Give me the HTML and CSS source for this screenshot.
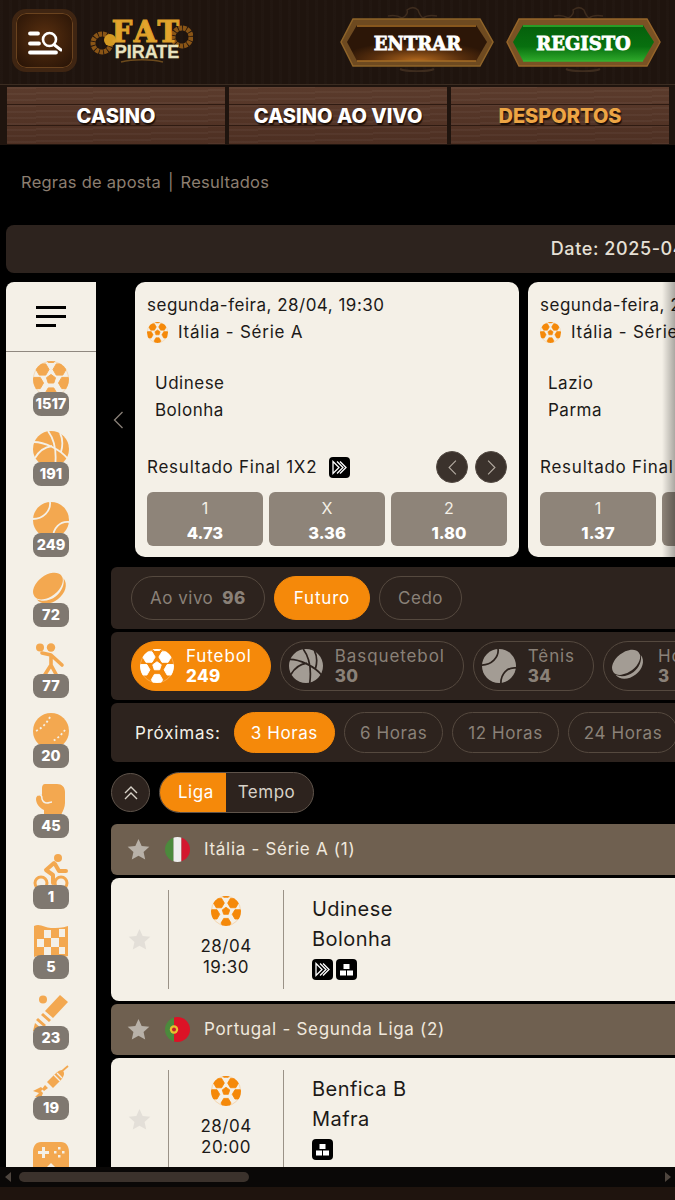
FILE: index.html
```html
<!DOCTYPE html>
<html lang="pt">
<head>
    <meta charset="UTF-8">
    <meta name="viewport" content="width=device-width, initial-scale=1.0">
    <title>Fat Pirate - Desportos</title>
    <link rel="stylesheet" href="styles.css">
</head>
<body>
    <svg class="icon-defs" width="0" height="0" aria-hidden="true">
        <defs>
            <clipPath id="ballClip"><circle cx="18" cy="18" r="18"/></clipPath>
            <symbol id="i-soccer" viewBox="0 0 36 36">
                <g clip-path="url(#ballClip)" fill="currentColor" stroke="currentColor" stroke-width="1" stroke-linejoin="round">
                    <path d="M3 8.500l3.250-5.600h6.500L16 8.500l-3.250 5.600h-6.500zM20 8.500l3.250-5.600h6.500L33 8.500l-3.250 5.600h-6.500zM-2.500 22l3.250-5.600h6.500L10.500 22l-3.250 5.600h-6.500zM25.500 22l3.250-5.600h6.500L38.500 22l-3.250 5.600h-6.500zM12 32.500l3.250-5.600h5.500L24 32.500l-3.250 5.600h-5.500zM12-2l3.250-1h5.500l3.250 1-3.250 3.500h-5.500z"/>
                    <path d="M18 13.500l4.500 3.200-1.700 5.300h-5.600l-1.700-5.300z"/>
                </g>
                <circle cx="18" cy="18" r="17.600" fill="none" stroke="currentColor" stroke-width=".6" opacity=".5"/>
            </symbol>
            <symbol id="i-basket" viewBox="0 0 36 36">
                <circle cx="18" cy="18" r="18" fill="currentColor"/>
                <path d="M15 0c6 8 9 20 7 36M1 11c10 0 26 7 34 17M2 27c4-7 10-11 17-12M27 2c3 6 3 12 1 19" fill="none" stroke="var(--gap)" stroke-width="1.800"/>
            </symbol>
            <symbol id="i-tennis" viewBox="0 0 36 36">
                <circle cx="18" cy="18" r="18" fill="currentColor"/>
                <path d="M17 0c1 9-7 17-17 17M36 20c-9-1-16 6-16 16" fill="none" stroke="var(--gap)" stroke-width="1.800"/>
            </symbol>
            <symbol id="i-puck" viewBox="0 0 36 36">
                <g transform="rotate(-38 18 18)" fill="currentColor">
                    <ellipse cx="18" cy="13" rx="17" ry="10.500"/>
                    <path d="M1 16.500c0 8 8 13 17 13s17-5 17-13c-3 6-10 9.500-17 9.500S4 22.500 1 16.500z"/>
                </g>
            </symbol>
            <symbol id="i-handball" viewBox="0 0 36 36">
                <circle cx="7" cy="4.500" r="4" fill="currentColor"/>
                <circle cx="18" cy="4.500" r="4.200" fill="currentColor"/>
                <path d="M9 10l9 2 11 10M18 12v10l-7 11M18 22l6 11" fill="none" stroke="currentColor" stroke-width="3.600" stroke-linecap="round" stroke-linejoin="round"/>
            </symbol>
            <symbol id="i-baseball" viewBox="0 0 36 36">
                <circle cx="18" cy="18" r="18" fill="currentColor"/>
                <path d="M17 4c-3 6-8 11-14 14M32 17c-3 4-7 8-12 11" fill="none" stroke="var(--gap)" stroke-width="1.800" stroke-dasharray="2 2.500"/>
            </symbol>
            <symbol id="i-glove" viewBox="0 0 36 36">
                <path d="M12 1h12c5 0 8 3 8 8v11c0 4-2 8-4 12v4H11v-9c-4-2-8-6-8-11 0-3 3-5 6-4V5c0-2 1-4 3-4z" fill="currentColor"/>
                <path d="M5 12c3-1 4 1 4 4 1 3 3 4 5 4 2 0 3-1 5-1" fill="none" stroke="var(--gap)" stroke-width="1.500"/>
            </symbol>
            <symbol id="i-cycling" viewBox="0 0 36 36">
                <circle cx="25" cy="4" r="4" fill="currentColor"/>
                <path d="M21 9l-8 7 7 5v8M22 10l4 7h7" fill="none" stroke="currentColor" stroke-width="4" stroke-linecap="round" stroke-linejoin="round"/>
                <circle cx="8" cy="29" r="6" fill="none" stroke="currentColor" stroke-width="3"/>
                <circle cx="28" cy="29" r="6" fill="none" stroke="currentColor" stroke-width="3"/>
            </symbol>
            <symbol id="i-flag" viewBox="0 0 36 36">
                <path d="M1 2c6-3 11 2 17 2s11 0 17-2v30c-6 2-11 2-17 2S7 30 1 33z" fill="currentColor"/>
                <path d="M11 6h7v8h-7zM4 15h7v8H4zM18 14h8v9h-8zM26 5h6v8h-6zM11 23h7v8h-7zM26 23h6v7h-6z" fill="var(--gap)"/>
            </symbol>
            <symbol id="i-cricket" viewBox="0 0 36 36">
                <circle cx="10" cy="4.500" r="4" fill="currentColor"/>
                <path d="M27 0l8 7-15 16-8-7zM10 18l8 7-2 2-8-7zM5 23l8 7-2 2-8-7zM2 28l7 6-3 2H0z" fill="currentColor"/>
            </symbol>
            <symbol id="i-darts" viewBox="0 0 36 36">
                <path d="M35 1l-7 6" fill="none" stroke="currentColor" stroke-width="1.800"/>
                <path d="M30 6c2 2 1 6-3 10l-7 7-6-6 7-7c4-4 7-6 9-4z" fill="currentColor"/>
                <path d="M21 10l6 6M24 8l5 5" fill="none" stroke="var(--gap)" stroke-width="1.400"/>
                <path d="M15 23l-4 3-2-2 3-4zM0 26l8-4 2 2-4 4zM2 32l6-6 2 2-2 5z" fill="currentColor"/>
            </symbol>
            <symbol id="i-game" viewBox="0 0 36 36">
                <g transform="translate(0 6)">
                    <path d="M8 1h20c5 0 8 4 8 10v17c0 4-2 7-5 7-3 0-5-3-8-8l-5-5-5 5c-3 5-5 8-8 8-3 0-5-3-5-7V11C0 5 3 1 8 1z" fill="currentColor"/>
                    <path d="M9 6h3v4h4v3h-4v4H9v-4H5v-3h4z" fill="var(--gap)"/>
                    <path d="M25 6h2.500v2.500H25zM25 14h2.500v2.500H25zM21 10h2.500v2.500H21zM29 10h2.500v2.500H29z" fill="var(--gap)"/>
                </g>
            </symbol>
            <symbol id="i-boost" viewBox="0 0 21 21">
                <rect width="21" height="21" rx="4" fill="#000"/>
                <path d="M4 4.500l6 6-6 6z" fill="none" stroke="#fff" stroke-width="1.300"/>
                <path d="M8 4.500l6 6-6 6M11 4.500l6 6-6 6" fill="none" stroke="#fff" stroke-width="1.300"/>
            </symbol>
            <symbol id="i-combo" viewBox="0 0 21 21">
                <rect width="21" height="21" rx="4" fill="#000"/>
                <path d="M7.500 5h6v5h-6zM4 11.500h6v5H4zM11 11.500h6v5h-6z" fill="#fff"/>
            </symbol>
            <symbol id="i-star" viewBox="0 0 24 24">
                <path d="M12 1l3.300 7.400 8 .8-6 5.400 1.700 7.900-7-4.100-7 4.100 1.700-7.900-6-5.400 8-.8z" fill="currentColor"/>
            </symbol>
            <symbol id="i-left" viewBox="0 0 12 20">
                <path d="M10 2L2 10l8 8" fill="none" stroke="currentColor" stroke-width="1.300"/>
            </symbol>
            <symbol id="i-right" viewBox="0 0 12 20">
                <path d="M2 2l8 8-8 8" fill="none" stroke="currentColor" stroke-width="1.300"/>
            </symbol>
        </defs>
    </svg>

    <header class="topbar">
        <button class="menu-btn">
            <svg width="34" height="28" viewBox="0 0 34 28">
                <path d="M2 6.500h8M2 16.500h9M2 25.500h26" fill="none" stroke="#fff" stroke-width="3.800" stroke-linecap="round"/>
                <circle cx="21.500" cy="12.500" r="6.500" fill="none" stroke="#fff" stroke-width="2.600"/>
                <path d="M26.500 18l6.500 5" fill="none" stroke="#fff" stroke-width="3" stroke-linecap="round"/>
            </svg>
        </button>
        <div class="logo">
            <svg class="logo-art" width="104" height="44" viewBox="0 0 104 44">
                <circle cx="13" cy="23" r="9" fill="none" stroke="#8a5516" stroke-width="5" stroke-dasharray="3.500 .8"/>
                <circle cx="93" cy="17" r="9" fill="none" stroke="#8a5516" stroke-width="5" stroke-dasharray="3.500 .8"/>
                <circle cx="21" cy="20" r="6" fill="#d49a22"/>
                <path d="M32 42c12-3 30-3 42 0" fill="none" stroke="#6c4a1c" stroke-width="1.500"/>
            </svg>
            <div class="logo-text">
                <span class="logo-fat">FAT</span>
                <span class="logo-pirate">PIRATE</span>
            </div>
        </div>
        <div class="auth">
            <a class="auth-btn">
                <svg width="155" height="66" viewBox="0 0 155 66">
                    <defs>
                        <radialGradient id="entrarFill" cx=".5" cy="1" r=".55">
                            <stop offset="0" stop-color="#b56a1e"/>
                            <stop offset=".6" stop-color="#572e0d"/>
                            <stop offset="1" stop-color="#2c1607"/>
                        </radialGradient>
                    </defs>
                    <path d="M62 12c5-2 6-6 5-8 4-3 8-3 11 0 1 3 2 6 5 8 4-3 8-3 14-2M62 12c-5-3-9-3-14-2" fill="none" stroke="#3e2c1e" stroke-width="1.500"/>
                    <path d="M60 63c6 3 28 3 34 0" fill="none" stroke="#3e2c1e" stroke-width="2"/>
                    <path d="M1 36l12-23h127l13 23-13 24H13z" fill="#6e4a20" stroke="#8f6429" stroke-width="1.500"/>
                    <path d="M7 36l10-17h119l11 17-11 19H17z" fill="url(#entrarFill)"/>
                    <path d="M17 20h119M17 55h119" stroke="#a56d26" stroke-width="1.300"/>
                </svg>
                <span>ENTRAR</span>
            </a>
            <a class="auth-btn">
                <svg width="155" height="66" viewBox="0 0 155 66">
                    <defs>
                        <linearGradient id="registoFill" x1="0" y1="0" x2="0" y2="1">
                            <stop offset="0" stop-color="#055f0c"/>
                            <stop offset=".6" stop-color="#08700f"/>
                            <stop offset="1" stop-color="#2ea82a"/>
                        </linearGradient>
                    </defs>
                    <path d="M62 12c5-2 6-6 5-8 4-3 8-3 11 0 1 3 2 6 5 8 4-3 8-3 14-2M62 12c-5-3-9-3-14-2" fill="none" stroke="#3e2c1e" stroke-width="1.500"/>
                    <path d="M60 63c6 3 28 3 34 0" fill="none" stroke="#3e2c1e" stroke-width="2"/>
                    <path d="M1 36l12-23h128l13 23-13 24H13z" fill="#7a5224" stroke="#96652a" stroke-width="1.500"/>
                    <path d="M7 36l10-17h120l11 17-11 19H17z" fill="url(#registoFill)"/>
                    <path d="M17 20h120M17 55h120" stroke="#35b02f" stroke-width="1.300"/>
                </svg>
                <span>REGISTO</span>
            </a>
        </div>
    </header>

    <nav class="tabs">
        <a class="tab">CASINO</a>
        <a class="tab">CASINO AO VIVO</a>
        <a class="tab active">DESPORTOS</a>
    </nav>

    <main class="content">
        <div class="wide">
            <div class="links">Regras de aposta <span class="links-sep">|</span> Resultados</div>
            <div class="date-bar">Date: 2025-04-28</div>

            <div class="columns">
                <aside class="sidebar">
                    <div class="burger"><i></i><i></i><i class="short"></i></div>
                    <div class="sport-list">
                        <a class="sport"><svg class="sport-icon"><use href="#i-soccer"/></svg><b>1517</b></a>
                        <a class="sport"><svg class="sport-icon"><use href="#i-basket"/></svg><b>191</b></a>
                        <a class="sport"><svg class="sport-icon"><use href="#i-tennis"/></svg><b>249</b></a>
                        <a class="sport"><svg class="sport-icon"><use href="#i-puck"/></svg><b>72</b></a>
                        <a class="sport"><svg class="sport-icon"><use href="#i-handball"/></svg><b>77</b></a>
                        <a class="sport"><svg class="sport-icon"><use href="#i-baseball"/></svg><b>20</b></a>
                        <a class="sport"><svg class="sport-icon"><use href="#i-glove"/></svg><b>45</b></a>
                        <a class="sport"><svg class="sport-icon"><use href="#i-cycling"/></svg><b>1</b></a>
                        <a class="sport"><svg class="sport-icon"><use href="#i-flag"/></svg><b>5</b></a>
                        <a class="sport"><svg class="sport-icon"><use href="#i-cricket"/></svg><b>23</b></a>
                        <a class="sport"><svg class="sport-icon"><use href="#i-darts"/></svg><b>19</b></a>
                        <a class="sport"><svg class="sport-icon"><use href="#i-game"/></svg></a>
                    </div>
                </aside>

                <section class="events">
                    <div class="slider">
                        <svg class="slider-prev"><use href="#i-left"/></svg>
                        <article class="card">
                            <div class="card-line">segunda-feira, 28/04, 19:30</div>
                            <div class="card-league"><svg class="card-ball"><use href="#i-soccer"/></svg>Itália - Série A</div>
                            <div class="card-teams"><div>Udinese</div><div>Bolonha</div></div>
                            <div class="card-market">
                                <span>Resultado Final 1X2</span>
                                <svg class="badge"><use href="#i-boost"/></svg>
                                <div class="card-arrows">
                                    <button class="round-btn"><svg><use href="#i-left"/></svg></button>
                                    <button class="round-btn"><svg><use href="#i-right"/></svg></button>
                                </div>
                            </div>
                            <div class="odds">
                                <a class="odd">1<b>4.73</b></a>
                                <a class="odd">X<b>3.36</b></a>
                                <a class="odd">2<b>1.80</b></a>
                            </div>
                        </article>
                        <article class="card">
                            <div class="card-line">segunda-feira, 28/04, 20:45</div>
                            <div class="card-league"><svg class="card-ball"><use href="#i-soccer"/></svg>Itália - Série A</div>
                            <div class="card-teams"><div>Lazio</div><div>Parma</div></div>
                            <div class="card-market">
                                <span>Resultado Final 1X2</span>
                                <svg class="badge"><use href="#i-boost"/></svg>
                                <div class="card-arrows">
                                    <button class="round-btn"><svg><use href="#i-left"/></svg></button>
                                    <button class="round-btn"><svg><use href="#i-right"/></svg></button>
                                </div>
                            </div>
                            <div class="odds">
                                <a class="odd">1<b>1.37</b></a>
                                <a class="odd">X<b>4.80</b></a>
                                <a class="odd">2<b>8.50</b></a>
                            </div>
                        </article>
                        <div class="slider-fade"></div>
                    </div>

                    <div class="panel panel-mode">
                        <a class="pill">Ao vivo <b>96</b></a>
                        <a class="pill on">Futuro</a>
                        <a class="pill">Cedo</a>
                    </div>

                    <div class="panel panel-sports">
                        <a class="pill sport-pill on">
                            <svg class="pill-icon"><use href="#i-soccer"/></svg>
                            <span>Futebol<b>249</b></span>
                        </a>
                        <a class="pill sport-pill">
                            <svg class="pill-icon"><use href="#i-basket"/></svg>
                            <span>Basquetebol<b>30</b></span>
                        </a>
                        <a class="pill sport-pill">
                            <svg class="pill-icon"><use href="#i-tennis"/></svg>
                            <span>Tênis<b>34</b></span>
                        </a>
                        <a class="pill sport-pill">
                            <svg class="pill-icon"><use href="#i-puck"/></svg>
                            <span>Hóquei<b>3</b></span>
                        </a>
                    </div>

                    <div class="panel panel-time">
                        <span class="panel-label">Próximas:</span>
                        <a class="pill on">3 Horas</a>
                        <a class="pill">6 Horas</a>
                        <a class="pill">12 Horas</a>
                        <a class="pill">24 Horas</a>
                    </div>

                    <div class="order">
                        <button class="collapse">
                            <svg width="16" height="18" viewBox="0 0 16 18"><path d="M2 9l6-6 6 6M2 15l6-6 6 6" fill="none" stroke="#d8d2c8" stroke-width="1.400"/></svg>
                        </button>
                        <div class="switch"><a class="on">Liga</a><a>Tempo</a></div>
                    </div>

                    <div class="league">
                        <svg class="star"><use href="#i-star"/></svg>
                        <svg class="flag" viewBox="0 0 25 25">
                            <clipPath id="flagIt"><circle cx="12.500" cy="12.500" r="12.500"/></clipPath>
                            <g clip-path="url(#flagIt)">
                                <path d="M0 0h8.500v25H0z" fill="#4b8a3c"/>
                                <path d="M8.500 0h8v25h-8z" fill="#eee"/>
                                <path d="M16.500 0H25v25h-8.500z" fill="#d3172e"/>
                            </g>
                        </svg>
                        <span>Itália - Série A (1)</span>
                    </div>
                    <div class="match">
                        <svg class="match-star"><use href="#i-star"/></svg>
                        <div class="match-time">
                            <svg class="match-ball"><use href="#i-soccer"/></svg>
                            <div>28/04</div>
                            <div>19:30</div>
                        </div>
                        <div class="match-teams">
                            <div>Udinese</div>
                            <div>Bolonha</div>
                            <div class="match-badges">
                                <svg class="badge"><use href="#i-boost"/></svg>
                                <svg class="badge"><use href="#i-combo"/></svg>
                            </div>
                        </div>
                    </div>

                    <div class="league">
                        <svg class="star"><use href="#i-star"/></svg>
                        <svg class="flag" viewBox="0 0 25 25">
                            <clipPath id="flagPt"><circle cx="12.500" cy="12.500" r="12.500"/></clipPath>
                            <g clip-path="url(#flagPt)">
                                <path d="M0 0h9v25H0z" fill="#4b8a3c"/>
                                <path d="M9 0h16v25H9z" fill="#dc1226"/>
                                <circle cx="9" cy="12.500" r="4.200" fill="#e8c02e"/>
                                <circle cx="9" cy="12.500" r="2" fill="#c3202c"/>
                            </g>
                        </svg>
                        <span>Portugal - Segunda Liga (2)</span>
                    </div>
                    <div class="match">
                        <svg class="match-star"><use href="#i-star"/></svg>
                        <div class="match-time">
                            <svg class="match-ball"><use href="#i-soccer"/></svg>
                            <div>28/04</div>
                            <div>20:00</div>
                        </div>
                        <div class="match-teams">
                            <div>Benfica B</div>
                            <div>Mafra</div>
                            <div class="match-badges">
                                <svg class="badge"><use href="#i-combo"/></svg>
                            </div>
                        </div>
                    </div>
                </section>
            </div>
        </div>
    </main>

    <div class="hscroll">
        <i class="hscroll-left"></i>
        <i class="hscroll-thumb"></i>
        <i class="hscroll-right"></i>
    </div>
    <div class="bottom-strip"></div>
</body>
</html>
```

FILE: styles.css
```css
* {
    box-sizing: border-box;
}
body {
    margin: 0;
    height: 1200px;
    overflow: hidden;
    background: #000;
    color: #1c1a18;
    font-family: "Inter", "Open Sans", sans-serif;
    font-size: 17px;
    letter-spacing: .5px;
}
a {
    color: inherit;
    text-decoration: none;
}
button {
    font: inherit;
    cursor: pointer;
}
.icon-defs {
    display: block;
    height: 0;
}

/* header */
.topbar {
    display: flex;
    align-items: flex-start;
    height: 85px;
    padding-left: 12px;
    background:
        repeating-linear-gradient(90deg, rgba(255, 255, 255, .012) 0 3px, transparent 3px 9px),
        #1f140e;
    border-bottom: 1px solid #3b2c21;
}
.menu-btn {
    display: flex;
    align-items: center;
    justify-content: center;
    width: 65px;
    height: 63px;
    margin-top: 9px;
    padding: 0;
    border: 4px solid #3f2512;
    border-radius: 14px;
    background: radial-gradient(circle at 50% 45%, #5a3010, #2c1607 85%);
    box-shadow: inset 0 0 0 1px #6a431f;
}
.logo {
    display: grid;
    width: 104px;
    height: 44px;
    margin: 20px 0 0 12px;
}
.logo-art,
.logo-text {
    grid-area: 1 / 1;
}
.logo-text {
    display: flex;
    flex-direction: column;
    align-items: center;
    padding-left: 12px;
    letter-spacing: 0;
    font-weight: 700;
}
.logo-fat {
    margin-top: 1px;
    font-family: "DejaVu Serif", serif;
    font-size: 29px;
    font-weight: 700;
    line-height: 23px;
    letter-spacing: 3px;
    color: #e2a42c;
    -webkit-text-stroke: 1.200px #dc9f2a;
}
.logo-pirate {
    font-family: "Liberation Sans", sans-serif;
    font-size: 18px;
    line-height: 16px;
    color: #e8e2bf;
    -webkit-text-stroke: .3px #e8e2bf;
}
.auth {
    display: flex;
    gap: 11px;
    margin: 6px 14px 0 auto;
}
.auth-btn {
    display: grid;
    place-items: center;
    width: 155px;
    height: 66px;
}
.auth-btn svg,
.auth-btn span {
    grid-area: 1 / 1;
}
.auth-btn span {
    margin-top: 8px;
    font-family: "DejaVu Serif", serif;
    font-size: 18px;
    font-weight: 700;
    letter-spacing: 0;
    color: #fff;
    -webkit-text-stroke: .8px #fff;
}

/* wood tabs */
.tabs {
    display: flex;
    gap: 4px;
    height: 60px;
    padding: 2px 6px 1px 7px;
    background: #1f140e;
}
.tab {
    flex: 1;
    display: flex;
    align-items: center;
    justify-content: center;
    font-size: 20px;
    font-weight: 800;
    letter-spacing: 0;
    color: #fff;
    text-shadow: 1px 2px 1px #1c0f08;
    background:
        linear-gradient(180deg, transparent 0 29%, #2f1b12 29% 31%, transparent 31% 66%, #2f1b12 66% 68%, transparent 68%),
        repeating-linear-gradient(179deg, rgba(255, 255, 255, .035) 0 2px, transparent 2px 6px),
        linear-gradient(180deg, #5b3b2c, #4d2f22);
}
.tab.active {
    color: #eda544;
}

/* main scroll area */
.content {
    height: 1022px;
    overflow: hidden;
}
.wide {
    width: 1280px;
    padding-left: 6px;
}
.links {
    height: 80px;
    padding: 26px 0 0 15px;
    line-height: 22px;
    font-size: 16.500px;
    letter-spacing: .25px;
    color: #8c7e70;
}
.links-sep {
    margin: 0 2px;
}
.date-bar {
    width: 1256px;
    height: 48px;
    margin-bottom: 9px;
    border-radius: 8px;
    background: #2d231e;
    color: #e6e0d6;
    font-size: 18px;
    font-weight: 500;
    letter-spacing: .6px;
    line-height: 48px;
    text-align: center;
}
.columns {
    display: flex;
    gap: 15px;
}

/* sports sidebar */
.sidebar {
    flex: 0 0 90px;
    background: #f4f0e7;
    border-top-left-radius: 8px;
}
.burger {
    display: flex;
    flex-direction: column;
    justify-content: center;
    gap: 6px;
    height: 70px;
    padding-left: 30px;
    border-bottom: 1px solid #8f8880;
}
.burger i {
    display: block;
    width: 30px;
    height: 3px;
    background: #000;
}
.burger i.short {
    width: 20px;
}
.sport-list {
    display: flex;
    flex-direction: column;
    align-items: center;
    gap: 15.400px;
    padding-top: 9px;
}
.sport {
    display: flex;
    flex-direction: column;
    align-items: center;
}
.sport-icon {
    display: block;
    width: 36px;
    height: 36px;
    color: #f3a850;
    --gap: #f4f0e7;
}
.sport b {
    min-width: 36px;
    height: 24px;
    margin-top: -5px;
    padding: 0 3px;
    border-radius: 8px;
    background: #7f7870;
    color: #fff;
    font-size: 14.500px;
    font-weight: 800;
    letter-spacing: 0;
    line-height: 24px;
    text-align: center;
    z-index: 1;
}

/* featured slider */
.events {
    flex: 1;
    min-width: 0;
}
.slider {
    position: relative;
    display: flex;
    align-items: center;
    gap: 9px;
    width: 564px;
}
.slider-prev {
    flex: 0 0 15px;
    width: 15px;
    height: 20px;
    color: #8a8178;
}
.card {
    flex: 0 0 384px;
    display: flex;
    flex-direction: column;
    height: 275px;
    padding: 12px 12px 11px;
    border-radius: 10px;
    background: #f4f0e7;
}
.card-line,
.card-league,
.card-teams div {
    height: 22px;
    line-height: 22px;
    white-space: nowrap;
}
.card-league {
    display: flex;
    align-items: center;
    margin-top: 5px;
    letter-spacing: .75px;
}
.card-ball {
    width: 21px;
    height: 21px;
    margin-right: 10px;
    color: #f5890a;
}
.card-teams {
    display: flex;
    flex-direction: column;
    gap: 5px;
    margin: 29px 0 0 8px;
    letter-spacing: .5px;
}
.card-market {
    display: flex;
    align-items: center;
    height: 32px;
    margin: auto 0 9px;
    letter-spacing: .75px;
    white-space: nowrap;
}
.badge {
    flex: none;
    width: 21px;
    height: 21px;
}
.card-market .badge {
    margin-left: 12px;
}
.card-arrows {
    display: flex;
    gap: 7px;
    margin-left: auto;
}
.round-btn {
    display: flex;
    align-items: center;
    justify-content: center;
    width: 32px;
    height: 32px;
    padding: 0;
    border: 1px solid #544b44;
    border-radius: 50%;
    background: #3b322c;
    color: #b4aca2;
}
.round-btn svg {
    width: 11px;
    height: 17px;
}
.odds {
    display: grid;
    grid-template-columns: repeat(3, 1fr);
    gap: 6px;
}
.odd {
    display: flex;
    flex-direction: column;
    align-items: center;
    justify-content: center;
    height: 54px;
    padding-top: 2px;
    border-radius: 6px;
    background: #8e8479;
    color: #f4f0e7;
    font-size: 16px;
    letter-spacing: 0;
    line-height: 24px;
}
.odd b {
    margin-top: 1px;
    color: #fff;
    font-size: 16.500px;
    font-weight: 800;
}
.slider-fade {
    position: absolute;
    top: 0;
    right: 0;
    bottom: 0;
    width: 13px;
    background: linear-gradient(90deg, rgba(0, 0, 0, 0), rgba(0, 0, 0, .3));
}

/* filter panels */
.panel {
    display: flex;
    align-items: center;
    gap: 9px;
    width: 1150px;
    margin-top: 3px;
    padding-left: 20px;
    border-radius: 6px;
    background: #2d231e;
}
.panel-mode {
    height: 62px;
    margin-top: 10px;
}
.panel-sports {
    height: 68px;
    letter-spacing: .9px;
}
.panel-time {
    height: 59px;
    padding-left: 24px;
    letter-spacing: .6px;
}
.panel-label {
    margin-right: 4px;
    letter-spacing: .8px;
    color: #f4f0e7;
}
.pill {
    display: flex;
    align-items: center;
    height: 44px;
    padding: 0 18px;
    border: 1px solid #55493f;
    border-radius: 22px;
    color: #8a8178;
    white-space: nowrap;
}
.panel-mode .pill.on {
    padding: 0 19px;
    letter-spacing: .8px;
}
.panel-time .pill {
    height: 41px;
    padding: 0 15px;
}
.panel-time .pill.on {
    padding: 0 16px;
}
.pill b {
    margin-left: 9px;
    font-weight: 800;
}
.pill.on {
    border-color: #f5890a;
    background: #f5890a;
    color: #fff;
}
.sport-pill {
    gap: 12px;
    height: 50px;
    padding: 0 18px 0 8px;
    border-radius: 25px;
    line-height: 20px;
}
.sport-pill span {
    display: flex;
    flex-direction: column;
}
.sport-pill b {
    margin: 0;
    letter-spacing: .3px;
}
.pill-icon {
    flex: none;
    width: 34px;
    height: 34px;
    color: #a39c94;
    --gap: #2d231e;
}
.pill.on .pill-icon {
    color: #fff;
    --gap: #f5890a;
}

/* sort row */
.order {
    display: flex;
    gap: 9px;
    margin-top: 10px;
}
.collapse {
    display: flex;
    align-items: center;
    justify-content: center;
    width: 39px;
    height: 39px;
    margin-top: 1px;
    padding: 0;
    border: 1px solid #5e534a;
    border-radius: 50%;
    background: #2d231e;
}
.switch {
    display: flex;
    height: 41px;
    overflow: hidden;
    border: 1px solid #5e534a;
    border-radius: 21px;
    background: #2d231e;
    color: #d8d2c8;
    line-height: 39px;
}
.switch a {
    padding: 0 18px 0 12px;
}
.switch .on {
    padding: 0 12px 0 18px;
    background: #f5890a;
    color: #fff;
}

/* event list */
.league {
    display: flex;
    align-items: center;
    height: 51px;
    width: 1150px;
    margin-top: 3px;
    padding: 0 0 2px 16px;
    border-radius: 6px;
    background: #6f6050;
    color: #efe8dd;
    letter-spacing: .7px;
}
.order + .league {
    margin-top: 11px;
}
.star {
    width: 23px;
    height: 23px;
    margin-top: 2px;
    color: #b8b1a8;
}
.flag {
    width: 25px;
    height: 25px;
    margin: 2px 14px 0 15px;
}
.match {
    display: flex;
    align-items: center;
    height: 123px;
    width: 1150px;
    margin-top: 3px;
    border-radius: 8px;
    background: #f4f0e7;
}
.match-star {
    flex: none;
    width: 23px;
    height: 23px;
    margin-left: 17px;
    color: #e3dfd8;
}
.match-time {
    display: flex;
    flex-direction: column;
    align-items: center;
    width: 116px;
    height: 99px;
    margin-left: 17px;
    padding-top: 6px;
    border-left: 1px solid #9a9287;
    border-right: 1px solid #9a9287;
    line-height: 21px;
}
.match-ball {
    width: 30px;
    height: 30px;
    margin-bottom: 10px;
    color: #f5890a;
}
.match-teams {
    padding: 0 0 5px 28px;
    font-size: 20px;
    letter-spacing: .45px;
    line-height: 30px;
}
.match-badges {
    display: flex;
    gap: 3px;
    margin-top: 5px;
    height: 22px;
}

/* fake page scrollbar */
.hscroll {
    display: flex;
    align-items: center;
    height: 20px;
    padding: 0 4px 0 5px;
    background: #0a0807;
}
.hscroll-left,
.hscroll-right {
    width: 0;
    height: 0;
    border-top: 5px solid transparent;
    border-bottom: 5px solid transparent;
}
.hscroll-left {
    border-right: 6px solid #4e453e;
}
.hscroll-right {
    margin-left: auto;
    border-left: 6px solid #4e453e;
}
.hscroll-thumb {
    width: 230px;
    height: 10px;
    margin-left: 8px;
    border-radius: 5px;
    background: #3b322c;
}
.bottom-strip {
    height: 13px;
    background: #1f140e;
}
```
